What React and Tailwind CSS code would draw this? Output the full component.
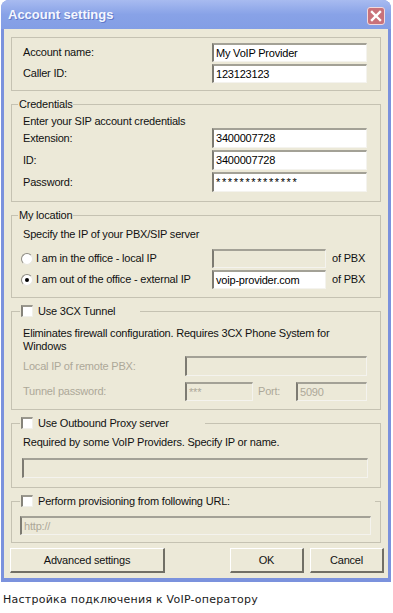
import React from 'react';

const GROUP = 'border border-[#c5c2b2]';

const Field = ({ value, disabled, className = '' }) => (
  <div
    className={`flex items-center overflow-hidden whitespace-nowrap border-t-2 border-l-2 border-r border-b border-t-[#a3a196] border-l-[#7d7b72] border-r-[#f4f3ee] border-b-[#f4f3ee] pl-[2px] ${
      disabled ? 'bg-[#ece9d8] text-[#aca899]' : 'bg-white text-black'
    } ${className}`}
  >
    {value}
  </div>
);

const Check = () => (
  <span className="inline-block h-[12px] w-[12px] shrink-0 border-t-2 border-l-2 border-r border-b border-t-[#9a988e] border-l-[#85837a] border-r-[#f1f0ea] border-b-[#f1f0ea] bg-white" />
);

const Radio = ({ checked }) => (
  <span className="flex h-[12px] w-[12px] shrink-0 items-center justify-center rounded-full border border-t-[#8d8b82] border-l-[#8d8b82] border-r-[#e9e7de] border-b-[#e9e7de] bg-white">
    {checked && <span className="h-[4px] w-[4px] rounded-full bg-black" />}
  </span>
);

const Btn = ({ children, className = '' }) => (
  <div
    className={`flex h-[25px] items-center justify-center border-t border-l border-r-2 border-b-2 border-t-white border-l-white border-r-[#716f65] border-b-[#716f65] bg-[#ece9d8] ${className}`}
  >
    {children}
  </div>
);

const Legend = ({ children, width }) => (
  <legend className={`ml-[8px] pl-[1px] leading-[14px] ${width}`}>
    <span className="flex items-center gap-[5px]">
      <Check />
      <span>{children}</span>
    </span>
  </legend>
);

export default function App() {
  return (
    <div className="h-[613px] w-[393px] overflow-hidden bg-white font-['Liberation_Sans',Arial,sans-serif] text-[11px] tracking-[-0.2px] text-[#111]">
      {/* Window */}
      <div className="ml-px w-[390px] rounded-t-[8px] bg-[#7b92dd] px-[3px] pb-[4px]">
        {/* Title bar */}
        <div className="-mx-[3px] flex h-[29px] items-center justify-between rounded-t-[8px] bg-linear-to-b from-[#a8bbf0] via-[#88a2e7] to-[#839ee5] pl-[7px] pr-[6px]">
          <span className="text-[13px] font-bold tracking-normal text-[#f4f7ff] [text-shadow:1px_1px_#6179c9]">Account settings</span>
          <div className="mt-[3px] flex h-[18px] w-[18px] items-center justify-center rounded-[3px] border border-[#f1d9dc] bg-[#c9727a]">
            <svg width="12" height="12" viewBox="0 0 12 12">
              <path d="M2 2 L10 10 M10 2 L2 10" stroke="white" strokeWidth="2.4" strokeLinecap="square" />
            </svg>
          </div>
        </div>

        {/* Body */}
        <div className="flex flex-col bg-[#ece9d8] px-[7px] pb-[5px]">
          {/* Account */}
          <div className={`${GROUP} mt-[8px] grid grid-cols-[1fr_155px] items-center gap-y-[2px] pt-[5px] pb-[7px] pl-[11px] pr-[13px]`}>
            <span>Account name:</span>
            <Field value="My VoIP Provider" className="h-[19px]" />
            <span>Caller ID:</span>
            <Field value="123123123" className="h-[19px]" />
          </div>

          {/* Credentials */}
          <fieldset className={`${GROUP} mt-[6px]`}>
            <legend className="ml-[6px] px-[1px] leading-[14px]">Credentials</legend>
            <div className="pl-[11px] pr-[13px] pb-[9px]">
              <p className="mt-[4px] leading-[13px]">Enter your SIP account credentials</p>
              <div className="grid grid-cols-[1fr_155px] items-center gap-y-[2px]">
                <span>Extension:</span>
                <Field value="3400007728" className="h-[20px]" />
                <span>ID:</span>
                <Field value="3400007728" className="h-[20px]" />
                <span>Password:</span>
                <Field value="**************" className="h-[20px] tracking-[1.6px]" />
              </div>
            </div>
          </fieldset>

          {/* My location */}
          <fieldset className={`${GROUP} mt-[6px]`}>
            <legend className="ml-[6px] px-[1px] leading-[14px]">My location</legend>
            <div className="pl-[9px] pr-[13px] pb-[8px]">
              <p className="mt-[6px] pl-[2px] leading-[13px]">Specify the IP of your PBX/SIP server</p>
              <div className="mt-[8px] flex flex-col gap-[2px]">
                <div className="flex h-[19px] items-center">
                  <div className="flex flex-1 items-center gap-[3px]">
                    <Radio />
                    <span>I am in the office - local IP</span>
                  </div>
                  <Field value="" disabled className="h-[19px] w-[114px]" />
                  <span className="ml-[6px] w-[35px]">of PBX</span>
                </div>
                <div className="flex h-[19px] items-center">
                  <div className="flex flex-1 items-center gap-[3px]">
                    <Radio checked />
                    <span>I am out of the office - external IP</span>
                  </div>
                  <Field value="voip-provider.com" className="h-[19px] w-[114px]" />
                  <span className="ml-[6px] w-[35px]">of PBX</span>
                </div>
              </div>
            </div>
          </fieldset>

          {/* 3CX Tunnel */}
          <fieldset className={`${GROUP} mt-[6px]`}>
            <Legend width="w-[120px]">Use 3CX Tunnel</Legend>
            <div className="pl-[11px] pr-[13px] pb-[8px]">
              <p className="mt-[9px] leading-[13px]">
                Eliminates firewall configuration. Requires 3CX Phone System for
                <br />
                Windows
              </p>
              <div className="mt-[3px] flex h-[20px] items-center text-[#aca899]">
                <span className="w-[162px]">Local IP of remote PBX:</span>
                <Field value="" disabled className="h-[20px] flex-1" />
              </div>
              <div className="mt-[6px] flex h-[19px] items-center text-[#aca899]">
                <span className="w-[162px]">Tunnel password:</span>
                <Field value="***" disabled className="h-[19px] w-[68px]" />
                <span className="ml-[5px] w-[38px]">Port:</span>
                <Field value="5090" disabled className="h-[19px] flex-1" />
              </div>
            </div>
          </fieldset>

          {/* Outbound proxy */}
          <fieldset className={`${GROUP} mt-[6px]`}>
            <Legend width="w-[185px]">Use Outbound Proxy server</Legend>
            <div className="pl-[10px] pr-[12px] pb-[9px]">
              <p className="mt-[6px] pl-[1px] leading-[13px]">Required by some VoIP Providers. Specify IP or name.</p>
              <Field value="" disabled className="mt-[9px] h-[20px]" />
            </div>
          </fieldset>

          {/* Provisioning */}
          <fieldset className={`${GROUP} mt-[6px]`}>
            <Legend width="w-[355px]">Perform provisioning from following URL:</Legend>
            <div className="pl-[8px] pr-[9px] pb-[7px]">
              <Field value="http://" disabled className="mt-[8px] h-[19px]" />
            </div>
          </fieldset>

          {/* Buttons */}
          <div className="-ml-px -mr-[3px] mt-[5px] flex items-center">
            <Btn className="w-[155px]">Advanced settings</Btn>
            <div className="flex-1" />
            <Btn className="w-[74px]">OK</Btn>
            <Btn className="ml-[6px] w-[74px]">Cancel</Btn>
          </div>
        </div>
      </div>

      <p className="mt-[11px] pl-[3px] font-['DejaVu_Sans',Verdana,sans-serif] text-[11px] leading-[14px] tracking-[0.25px] text-[#1a1a1a]">
        Настройка подключения к VoIP-оператору
      </p>
    </div>
  );
}
